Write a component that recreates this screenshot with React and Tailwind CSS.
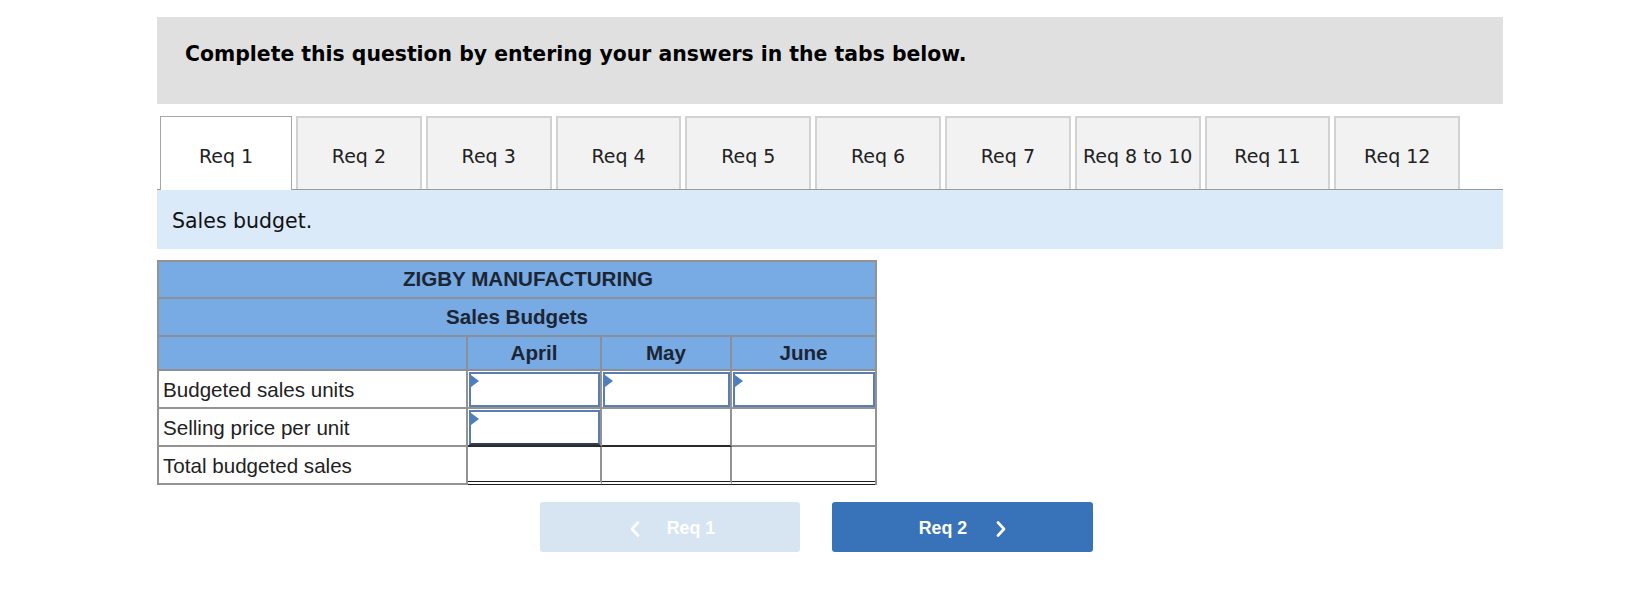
import React from 'react';

const tabs = ['Req 2', 'Req 3', 'Req 4', 'Req 5', 'Req 6', 'Req 7', 'Req 8 to 10', 'Req 11', 'Req 12'];

const verdana = { fontFamily: '"DejaVu Sans", Verdana, sans-serif' };
const arial = { fontFamily: '"Liberation Sans", Arial, sans-serif' };

const Marker = () => (
    <svg className="absolute left-0 top-[1px]" width="8" height="12" viewBox="0 0 8 12">
        <polygon points="0,0 8,6 0,12" fill="#4b7fc0" />
    </svg>
);

const InputBox = ({ dark }) => (
    <div className={`relative h-full ml-[1px] border-2 border-[#5a7db3] bg-white ${dark ? 'border-b-[#2f3f58]' : ''}`}>
        <Marker />
    </div>
);

const Chevron = ({ dir }) => (
    <svg width="10" height="16" viewBox="0 0 10 16" fill="none">
        <polyline
            points={dir === 'left' ? '8,1.5 2,8 8,14.5' : '2,1.5 8,8 2,14.5'}
            stroke="white"
            strokeWidth="2.6"
            strokeLinecap="round"
            strokeLinejoin="round"
        />
    </svg>
);

export default function App() {
    return (
        <div className="w-[1640px] h-[603px] bg-white overflow-hidden">
            <div className="ml-[157px] w-[1346px] pt-[17px]">
                {/* instructions */}
                <div className="h-[87px] bg-[#e0e0e0] pl-[28px] pt-[25px]">
                    <p className="text-[20.4px] leading-[24px] font-bold text-black" style={verdana}>
                        Complete this question by entering your answers in the tabs below.
                    </p>
                </div>

                {/* tabs */}
                <div className="mt-[12px] flex items-start border-b border-[#9a9a9a]" style={verdana}>
                    <div className="relative z-10 ml-[3px] w-[132px] h-[74px] -mb-px bg-white border border-b-0 border-[#a6a6a6] flex items-center justify-center pt-[5px] text-[19px] text-[#222]">
                        Req 1
                    </div>
                    {tabs.map(t => (
                        <div key={t} className="ml-[4px] w-[125.8px] h-[73px] bg-[#f2f2f2] border-2 border-b-0 border-[#d2d2d2] flex items-center justify-center pt-[5px] text-[19px] text-[#222]">
                            {t}
                        </div>
                    ))}
                </div>

                <div className="h-[59px] bg-[#daeaf8] flex items-center pl-[15px] pt-[4px] text-[20.5px] text-[#111]" style={verdana}>
                    Sales budget.
                </div>

                {/* budget table */}
                <div className="mt-[11px] w-[720px] border-t-2 border-x-2 border-[#939393] text-[20.6px]" style={arial}>
                    <div className="h-[37px] bg-[#78aae3] border-b-2 border-[#8a8f98] flex items-center justify-center pl-[22px] font-bold text-[#1b2533]">
                        ZIGBY MANUFACTURING
                    </div>
                    <div className="h-[38px] bg-[#78aae3] border-b-2 border-[#8a8f98] flex items-center justify-center font-bold text-[#1b2533]">
                        Sales Budgets
                    </div>
                    <div className="h-[34px] bg-[#78aae3] border-b-2 border-[#8a8f98] grid grid-cols-[309px_134px_130px_143px] font-bold text-[#1b2533]">
                        <div className="border-r-2 border-[#8a8f98]" />
                        <div className="border-r-2 border-[#8a8f98] flex items-center justify-center">April</div>
                        <div className="border-r-2 border-[#8a8f98] flex items-center justify-center">May</div>
                        <div className="flex items-center justify-center">June</div>
                    </div>

                    <div className="h-[38px] border-b-2 border-[#939393] grid grid-cols-[309px_134px_130px_143px] text-[#222]">
                        <div className="border-r-2 border-[#939393] flex items-center pl-[4px] pt-[3px]">Budgeted sales units</div>
                        <div className="border-r-2 border-[#939393] pt-[1px]"><InputBox /></div>
                        <div className="border-r-2 border-[#939393] pt-[1px]"><InputBox /></div>
                        <div className="pt-[1px]"><InputBox /></div>
                    </div>

                    <div className="h-[38px] grid grid-cols-[309px_134px_130px_143px] text-[#222]">
                        <div className="border-r-2 border-b-2 border-[#939393] flex items-center pl-[4px] pt-[3px]">Selling price per unit</div>
                        <div className="border-r-2 border-r-[#939393] border-b-2 border-b-[#2a2a2a] pt-[1px]"><InputBox dark /></div>
                        <div className="border-r-2 border-r-[#939393] border-b-2 border-b-[#2a2a2a]" />
                        <div className="border-b-2 border-[#939393]" />
                    </div>

                    <div className="h-[38px] grid grid-cols-[309px_134px_130px_143px] text-[#222]">
                        <div className="border-r-2 border-b-2 border-[#939393] flex items-center pl-[4px] pt-[3px]">Total budgeted sales</div>
                        <div className="border-r-2 border-r-[#939393] border-b-4 border-double border-b-[#1e1e1e]" />
                        <div className="border-r-2 border-r-[#939393] border-b-4 border-double border-b-[#1e1e1e]" />
                        <div className="border-b-4 border-double border-b-[#1e1e1e]" />
                    </div>
                </div>

                {/* navigation */}
                <div className="mt-[17px] ml-[383px] flex gap-[32px] text-[17.8px] font-bold text-white" style={arial}>
                    <button className="w-[260px] h-[50px] rounded-[3px] bg-[#d7e4f1] flex items-center justify-center gap-[27px] pt-[3px] pl-[5px]">
                        <Chevron dir="left" />
                        <span>Req 1</span>
                    </button>
                    <button className="w-[261px] h-[50px] rounded-[3px] bg-[#3872b8] flex items-center justify-center gap-[29px] pt-[3px]">
                        <span>Req 2</span>
                        <Chevron dir="right" />
                    </button>
                </div>
            </div>
        </div>
    );
}
